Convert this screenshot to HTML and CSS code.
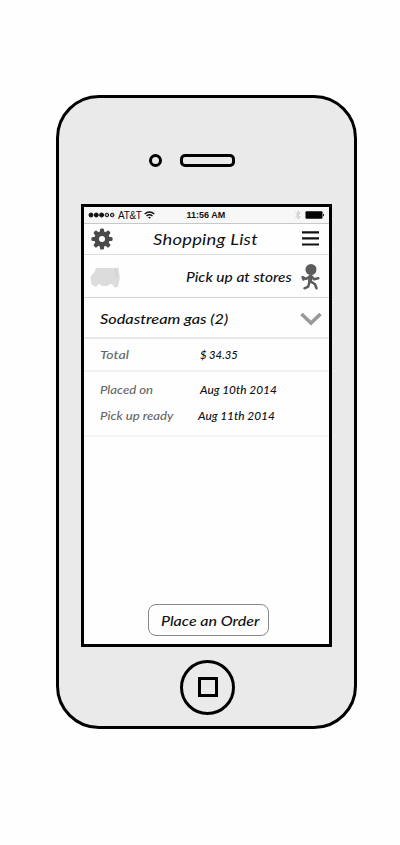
FILE: index.html
```
<!DOCTYPE html>
<html lang="en">
<head>
<meta charset="utf-8">
<title>Shopping List</title>
<link rel="stylesheet" href="styles.css">
</head>
<body>
<main class="phone">
  <div class="earpiece"><span class="camera"></span><span class="speaker"></span></div>
  <section class="screen">
    <div class="status">
      <svg class="signal" width="27" height="6" viewBox="0 0 27 6"><g fill="#111" stroke="#111"><circle cx="3" cy="3" r="2"/><circle cx="8.3" cy="3" r="2"/><circle cx="13.6" cy="3" r="2"/><circle cx="18.9" cy="3" r="1.8" fill="#aaa"/><circle cx="24.2" cy="3" r="1.8" fill="#aaa"/></g></svg>
      <span class="carrier">AT&amp;T</span>
      <svg class="wifi" width="11" height="8" viewBox="0 0 11 8" fill="none" stroke="#111" stroke-width="1.4"><path d="M.7 3Q5.5-1 10.3 3M2.5 5Q5.5 2.5 8.5 5"/><path d="M4 6.2Q5.5 5.2 7 6.2L5.5 7.8Z" fill="#111" stroke="none"/></svg>
      <span class="time">11:56 AM</span>
      <svg class="bluetooth" width="8" height="10" viewBox="0 0 8 10" fill="none" stroke="#c9c9c9"><path d="M1.5 2.7L6 7 4 9V1L6 3 1.5 7.3"/></svg>
      <svg class="battery" width="20" height="8" viewBox="0 0 20 8"><rect x=".5" y=".3" width="17" height="7.4" rx="1" fill="#050505"/><path d="M18 2.5Q20 4 18 5.5Z" fill="#050505"/></svg>
    </div>
    <header class="bar">
      <svg class="gear" width="22" height="22" viewBox="-11 -11 22 22"><g fill="#4a4a4a"><g id="teeth"><rect x="-2.1" y="-10.6" width="4.2" height="21.2" rx="1.5"/><rect x="-10.6" y="-2.1" width="21.2" height="4.2" rx="1.5"/></g><use href="#teeth" transform="rotate(45)"/><circle r="7.7"/></g><circle r="3" fill="#fefefe"/></svg>
      <h1 class="title">Shopping List</h1>
      <svg class="menu" width="17" height="15" viewBox="0 0 17 15" stroke="#111" stroke-width="2.1"><path d="M0 1.4H17M0 7.4H17M0 13.5H17"/></svg>
    </header>
    <div class="pickup">
      <svg class="van" width="30" height="21" viewBox="0 0 30 21" fill="#dcdcdc"><path d="M6 1H23L28.5 .5 29.8 11 28 20 24.5 20.5Q22.5 15.5 19 17.5L17.5 19 12 19Q10 15.5 7.5 18L6 20 1.5 17.5 .5 10 4.5 5Z"/><path d="M25.5 2L27 11" stroke="#cdcdcd" fill="none"/></svg>
      <span class="method">Pick up at stores</span>
      <svg class="walker" width="19" height="26" viewBox="0 0 19 26" fill="none" stroke="#5c5c5c" stroke-width="2.5" stroke-linecap="round" stroke-linejoin="round"><circle cx="10" cy="5.5" r="5.5" fill="#5c5c5c" stroke="none"/><path d="M9.4 12.7L9 17.3" stroke-width="4"/><path d="M9 12.5L5 14.8 1.6 13.2M1.6 13.2L2.5 15.5M10.5 12.2L13 15.3 17.3 14.2M8.5 18L7.2 22.6 3.5 24.3M10.5 18L14 20.3 15.5 24.3"/></svg>
    </div>
    <div class="item">
      <span class="product">Sodastream gas (2)</span>
      <svg class="chevron" width="22" height="14" viewBox="0 0 22 14" fill="none" stroke="#999" stroke-width="3.6"><path d="M1.5 2L11 11 20.5 2"/></svg>
    </div>
    <div class="total"><span class="label total-label">Total</span><span class="value price">$ 34.35</span></div>
    <div class="dates">
      <div class="date"><span class="label placed-label">Placed on</span><span class="value placed">Aug 10th 2014</span></div>
      <div class="date"><span class="label ready-label">Pick up ready</span><span class="value ready">Aug 11th 2014</span></div>
    </div>
    <button class="order"><span>Place an Order</span></button>
  </section>
  <div class="home"><span></span></div>
</main>
</body>
</html>
```
FILE: styles.css
```
* { box-sizing: border-box; }
body { margin: 0; background: #fefefe; color: #111; padding: 94.5px 0 0 55.5px; }
svg { display: block; flex: none; }
span, h1 { white-space: nowrap; flex: none; }
.phone {
  width: 301px; height: 634px; border: 3px solid #000; border-radius: 43px;
  background: #eaeaea; display: flex; flex-direction: column;
  font-family: "Lucida Handwriting", Lato, sans-serif; font-style: italic; font-weight: 500;
}
.earpiece { height: 106.5px; padding: 56px 0 0 90px; display: flex; gap: 18px; align-items: flex-start; }
.camera { width: 13px; height: 13px; border: 3px solid #000; border-radius: 50%; }
.speaker { width: 55px; height: 13px; border: 3px solid #000; border-radius: 5px; }
.screen {
  width: 251px; height: 443px; flex: none; margin-left: 22.5px; border: 3px solid #000;
  background: #fefefe; display: flex; flex-direction: column;
}
.status {
  height: 17px; flex: none; background: #f7f7f7; border-bottom: 1px solid #c8c8c8; display: flex; align-items: center;
  padding-left: 4px; font-family: "Liberation Sans", sans-serif; font-style: normal; font-weight: 400;
}
.carrier { font-size: 10px; margin-left: 3px; width: 24px; letter-spacing: -0.3px; }
.wifi { margin-left: 2px; }
.time { font-size: 9px; font-weight: 700; margin-left: 31.5px; width: 39px; }
.bluetooth { margin-left: 68px; }
.battery { margin-left: 3.5px; }
.bar { height: 31px; flex: none; border-bottom: 1.5px solid #ddd; display: flex; align-items: center; padding-left: 7px; }
.title, .method, .product, .label, .value, .order span { transform-origin: left center; }
.title { margin: -1px 0 0 40px; width: 106px; font-size: 16px; font-weight: 400; letter-spacing: 0.2px; transform: scaleX(1.15); }
.menu { margin: -1px 0 0 43px; }
.pickup { height: 43px; flex: none; border-bottom: 1px solid #d5d5d5; display: flex; align-items: center; padding: 2px 0 0 6px; }
.method { margin-left: 66px; width: 106px; font-size: 13px; transform: scaleX(1.19); }
.walker { margin-left: 9px; margin-top: -1px; }
.item { height: 41px; flex: none; border-bottom: 2px solid #e8e8e8; display: flex; align-items: center; padding: 3px 0 0 16px; }
.product { width: 129px; font-size: 13px; transform: scaleX(1.25); }
.chevron { margin-left: 71px; }
.total { height: 33px; flex: none; border-bottom: 2px solid #f1f1f1; display: flex; align-items: center; padding: 1px 0 0 16px; }
.label, .value { font-size: 10.5px; }
.label { color: #666; width: 100px; transform: scaleX(1.25); }
.total-label { transform: scaleX(1.35); }
.value { transform: scaleX(1.13); }
.price { transform: scaleX(1.07); }
.dates { height: 65px; flex: none; border-bottom: 2px solid #f4f4f4; padding: 5px 0 0 16px; }
.date { height: 26px; display: flex; align-items: center; }
.ready { margin-left: -2px; }
.order {
  width: 121px; height: 32px; flex: none; margin: 167px 0 0 64px; padding: 1px 0 0 11.5px; border: 1.5px solid #888;
  border-radius: 8px; background: #fefefe; text-align: left; color: #111; font: inherit; font-size: 13px;
}
.order span { display: inline-block; transform: scaleX(1.23); }
.home { width: 55px; height: 55px; border: 3px solid #000; border-radius: 50%; margin: 12.5px 0 0 121.5px; display: grid; place-items: center; }
.home span { width: 20px; height: 20px; border: 3px solid #000; }
```
